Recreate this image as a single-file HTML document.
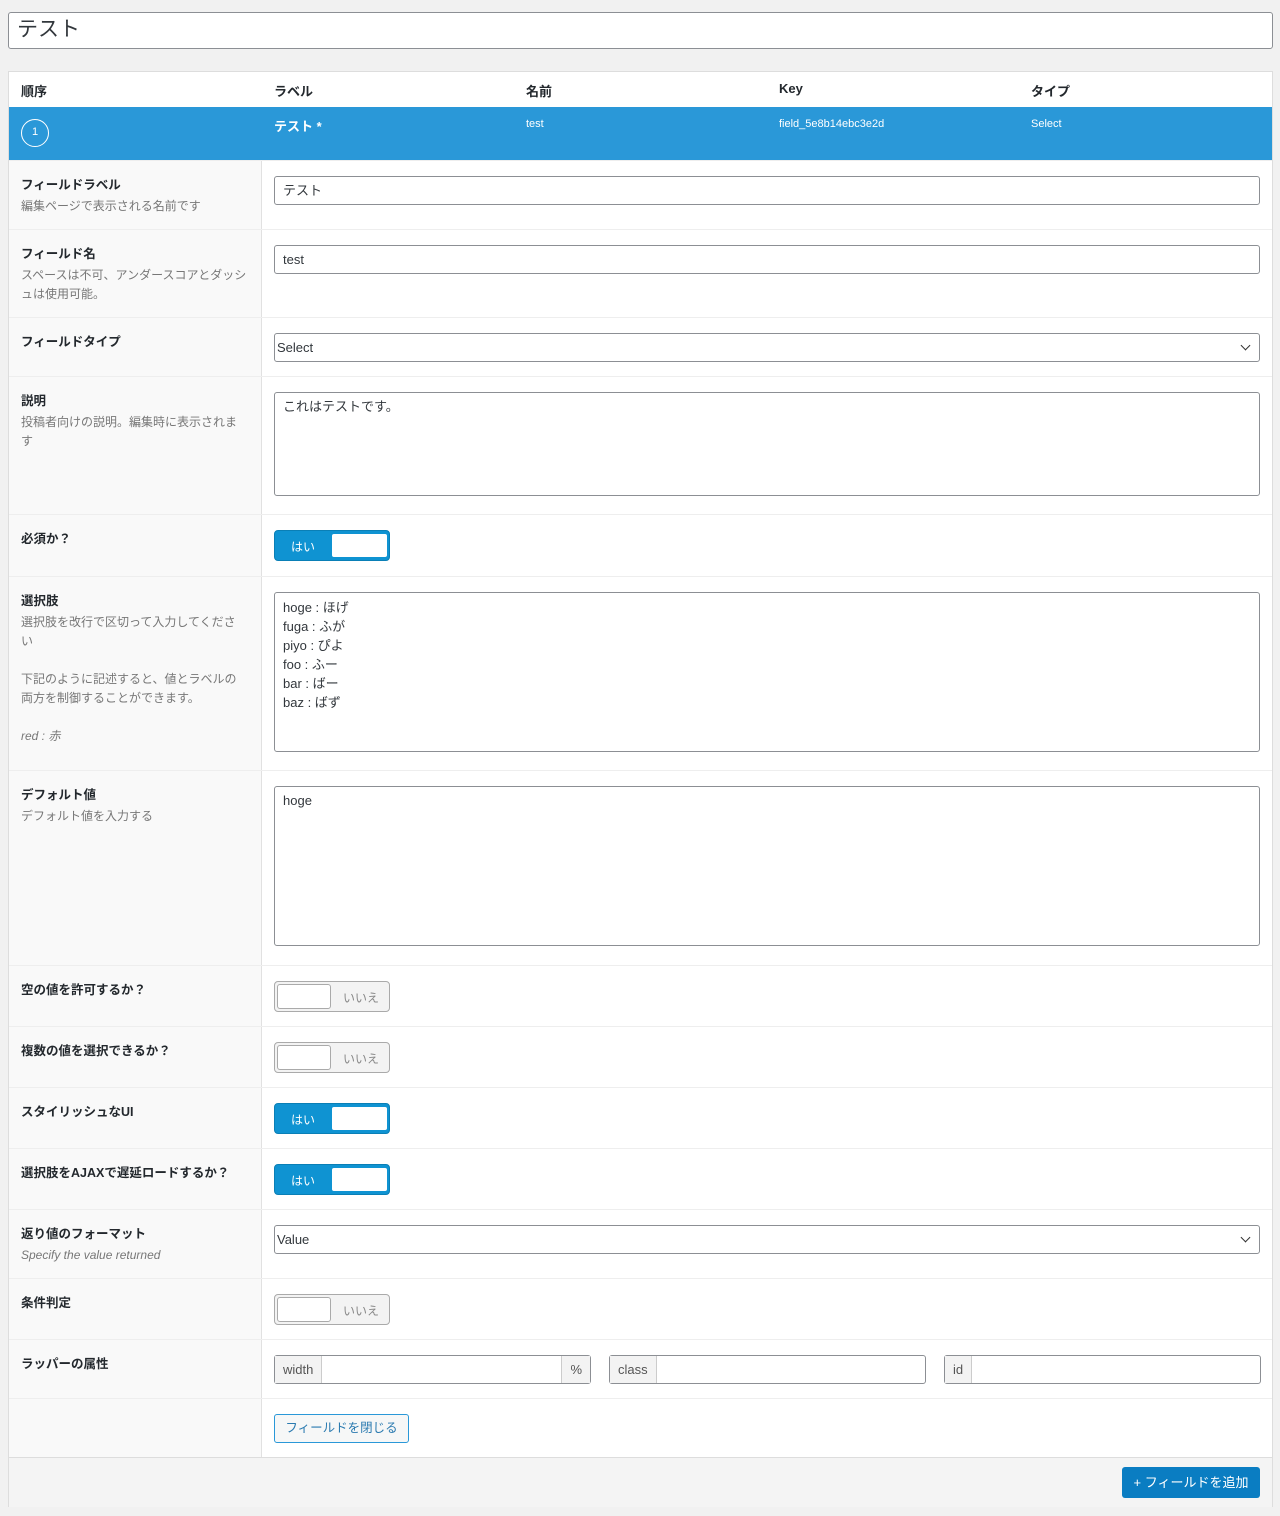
<!DOCTYPE html>
<html><head><meta charset="utf-8"><style>
*{box-sizing:border-box;margin:0;padding:0}
body{width:1280px;height:1516px;background:#f1f1f1;font-family:"Liberation Sans","Noto Sans CJK JP",sans-serif;color:#23282d;position:relative;overflow:hidden;font-size:13px}
.abs{position:absolute}
.title{left:8px;top:12px;width:1265px;height:37px;background:#fff;border:1px solid #8c8f94;border-radius:3px;font-size:21px;padding:4px 8px;line-height:26px;color:#32373c}
.panel{left:8px;top:71px;width:1265px;height:1436px;background:#fff;border:1px solid #ddd}
.hd{top:0;height:35px;left:0;right:0;font-weight:bold;font-size:13px}
.hd span{position:absolute;top:9px}
.blue{left:0;right:0;top:35px;height:54px;background:#2a98d8;color:#fff}
.blue span{position:absolute;top:11px;font-size:11px}
.circ{left:12px;top:12px;width:28px;height:28px;border:1.5px solid #fff;border-radius:50%;text-align:center;line-height:25px;font-size:11px}
.row{left:0;right:0;border-top:1px solid #eee}
.lab{position:absolute;left:0;top:0;bottom:0;width:253px;background:#f9f9f9;border-right:1px solid #e1e1e1;padding:13px 14px 13px 12px}
.lab b{display:block;font-size:12.5px;margin-bottom:4px}
.lab p{font-size:12px;color:#777;line-height:19px}
.inp{position:absolute;left:265px;right:12px;border:1px solid #8c8f94;border-radius:3px;background:#fff;font-size:13px;padding:5px 8px;color:#32373c;line-height:18px}
.sel{padding-left:2px}
.sel:after{content:"";position:absolute;right:10px;top:8px;width:6px;height:6px;border-right:1.5px solid #333;border-bottom:1.5px solid #333;transform:rotate(45deg)}
.tg{position:absolute;left:265px;top:15px;width:116px;height:31px;border-radius:4px;font-size:12px}
.on{background:#0f93d2;border:1px solid #0a7fb6;color:#fff}
.on i{position:absolute;right:2px;top:3px;width:55px;height:23px;background:#fff;border-radius:2px}
.on span{position:absolute;left:16px;top:7px}
.off{background:#f3f3f3;border:1px solid #aaa;color:#888}
.off i{position:absolute;left:2px;top:2px;width:54px;height:25px;background:#fff;border:1px solid #aaa;border-radius:3px}
.off span{position:absolute;right:10px;top:7px}
.grp{position:absolute;top:15px;height:29px;border:1px solid #8c8f94;border-radius:3px;background:#fff;font-size:13px;color:#555}
.grp span{position:absolute;top:0;bottom:0;background:#f3f3f3;line-height:27px;padding:0 8px}
</style></head><body>
<div class="abs title">テスト</div>
<div class="abs panel">
 <div class="abs hd"><span style="left:12px">順序</span><span style="left:265px">ラベル</span><span style="left:517px">名前</span><span style="left:770px">Key</span><span style="left:1022px">タイプ</span></div>
 <div class="abs blue">
  <div class="abs circ">1</div>
  <span style="left:265px;font-size:13px;font-weight:bold;top:9px">テスト *</span>
  <span style="left:517px">test</span><span style="left:770px">field_5e8b14ebc3e2d</span><span style="left:1022px">Select</span>
 </div>
 <div class="abs row" style="top:88px;height:69px"><div class="lab"><b>フィールドラベル</b><p>編集ページで表示される名前です</p></div><div class="inp" style="top:15px;height:29px">テスト</div></div>
 <div class="abs row" style="top:157px;height:88px"><div class="lab"><b>フィールド名</b><p>スペースは不可、アンダースコアとダッシュは使用可能。</p></div><div class="inp" style="top:15px;height:29px">test</div></div>
 <div class="abs row" style="top:245px;height:59px"><div class="lab"><b>フィールドタイプ</b></div><div class="inp sel" style="top:15px;height:29px">Select</div></div>
 <div class="abs row" style="top:304px;height:138px"><div class="lab"><b>説明</b><p>投稿者向けの説明。編集時に表示されま す</p></div><div class="inp" style="top:15px;height:104px">これはテストです。</div></div>
 <div class="abs row" style="top:442px;height:62px"><div class="lab"><b>必須か？</b></div><div class="tg on"><span>はい</span><i></i></div></div>
 <div class="abs row" style="top:504px;height:194px"><div class="lab"><b>選択肢</b><p>選択肢を改行で区切って入力してくださ い</p><p style="margin-top:19px">下記のように記述すると、値とラベルの両方を制御することができます。</p><p style="margin-top:19px;font-style:italic">red : 赤</p></div><div class="inp" style="top:15px;height:160px;line-height:19px">hoge : ほげ<br>fuga : ふが<br>piyo : ぴよ<br>foo : ふー<br>bar : ばー<br>baz : ばず</div></div>
 <div class="abs row" style="top:698px;height:195px"><div class="lab"><b>デフォルト値</b><p>デフォルト値を入力する</p></div><div class="inp" style="top:15px;height:160px">hoge</div></div>
 <div class="abs row" style="top:893px;height:61px"><div class="lab"><b>空の値を許可するか？</b></div><div class="tg off"><i></i><span>いいえ</span></div></div>
 <div class="abs row" style="top:954px;height:61px"><div class="lab"><b>複数の値を選択できるか？</b></div><div class="tg off"><i></i><span>いいえ</span></div></div>
 <div class="abs row" style="top:1015px;height:61px"><div class="lab"><b>スタイリッシュなUI</b></div><div class="tg on"><span>はい</span><i></i></div></div>
 <div class="abs row" style="top:1076px;height:61px"><div class="lab"><b>選択肢をAJAXで遅延ロードするか？</b></div><div class="tg on"><span>はい</span><i></i></div></div>
 <div class="abs row" style="top:1137px;height:69px"><div class="lab"><b>返り値のフォーマット</b><p style="font-style:italic">Specify the value returned</p></div><div class="inp sel" style="top:15px;height:29px">Value</div></div>
 <div class="abs row" style="top:1206px;height:61px"><div class="lab"><b>条件判定</b></div><div class="tg off"><i></i><span>いいえ</span></div></div>
 <div class="abs row" style="top:1267px;height:59px"><div class="lab"><b>ラッパーの属性</b></div>
  <div class="grp" style="left:265px;width:317px"><span style="left:0;border-right:1px solid #ccc">width</span><span style="right:0;border-left:1px solid #ccc">%</span></div>
  <div class="grp" style="left:600px;width:317px"><span style="left:0;border-right:1px solid #ccc">class</span></div>
  <div class="grp" style="left:935px;width:317px"><span style="left:0;border-right:1px solid #ccc">id</span></div>
 </div>
 <div class="abs row" style="top:1326px;height:59px"><div class="lab"></div>
  <div class="abs" style="left:265px;top:15px;width:135px;height:29px;border:1px solid #2a98d8;border-radius:3px;background:#f6f7f7;color:#2a7ab0;font-size:12.5px;text-align:center;line-height:27px">フィールドを閉じる</div></div>
 <div class="abs" style="left:0;right:0;top:1385px;height:50px;background:#f4f4f4;border-top:1px solid #ddd">
  <div class="abs" style="right:12px;top:9px;width:138px;height:31px;background:#0a7dc2;border-radius:3px;color:#fff;font-size:13px;text-align:center;line-height:31px">+ フィールドを追加</div></div>
</div>
</body></html>
